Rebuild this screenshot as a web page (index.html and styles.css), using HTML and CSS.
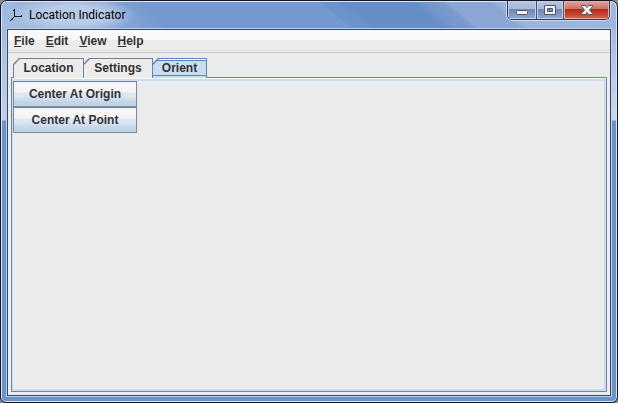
FILE: index.html
```html
<!DOCTYPE html>
<html lang="en">
<head>
<meta charset="utf-8">
<title>Location Indicator</title>
<link rel="stylesheet" href="styles.css">
</head>
<body>
<div class="window">
  <header class="titlebar">
    <svg class="app-icon" width="14" height="14" viewBox="0 0 14 14" shape-rendering="crispEdges" fill="#111820"><path d="M4 1h1v8H4zM5 8h7v1H5zM11 7h1v1h-1zM3 9h1v1H3zM2 10h1v1H2zM1 11h2v1H1zM0 12h1v1H0zM3 2h1v1H3z"/></svg>
    <h1 class="title">Location Indicator</h1>
    <div class="controls">
      <button class="control" aria-label="Minimize"><svg width="14" height="14" viewBox="0 0 14 14"><rect x="1.500" y="7.500" width="11" height="4" rx="1" fill="#f4f4f4" stroke="#535666"/></svg></button>
      <button class="control" aria-label="Maximize"><svg width="14" height="14" viewBox="0 0 14 14"><path fill-rule="evenodd" d="M1.500 2.500h11v9h-11zM4.500 5.500v3h5v-3z" fill="#f4f4f4" stroke="#535666"/></svg></button>
      <button class="control close" aria-label="Close"><svg width="14" height="14" viewBox="0 0 14 14"><path d="M1.500 2.500h4L7 4.500l1.500-2h4v1L9.500 7l3 3.500v1h-4L7 9.500l-1.500 2h-4v-1L4.500 7l-3-3.500z" fill="#f6f6f6" stroke="#535666"/></svg></button>
    </div>
  </header>
  <main class="content">
    <nav class="menubar">
      <button><u>F</u>ile</button>
      <button><u>E</u>dit</button>
      <button><u>V</u>iew</button>
      <button><u>H</u>elp</button>
    </nav>
    <div class="tabs" role="tablist">
      <button class="tab location" role="tab" aria-selected="false"><span>Location</span></button>
      <button class="tab settings" role="tab" aria-selected="false"><span>Settings</span></button>
      <button class="tab orient" role="tab" aria-selected="true"><span>Orient</span></button>
    </div>
    <section class="pane" role="tabpanel">
      <div class="actions">
        <button class="action">Center At Origin</button>
        <button class="action">Center At Point</button>
      </div>
    </section>
  </main>
</div>
</body>
</html>
```
FILE: styles.css
```css
* { box-sizing: border-box; }
body { margin: 0; background: #8a8a88; font: bold 12px/16px "Liberation Sans", Arial, sans-serif; color: #333; }
button { font: inherit; color: inherit; border: 0; padding: 0; margin: 0; background: none; }

.window {
  display: flex;
  flex-direction: column;
  min-height: 100vh;
  padding: 0 5px 4px;
  border: 1px solid #14182a;
  border-radius: 7px 7px 6px 6px;
  box-shadow: inset 0 0 0 1px #d8e8f8;
  background:
    linear-gradient(#d8e8f8, #d8e8f8) 0 0 / 100% 1px no-repeat,
    radial-gradient(ellipse 64px 18px at 72px 14px, #b9cce7 50%, #b9cce700 100%) no-repeat,
    linear-gradient(#a5bce000 28px, #a5bce0 28px, #c9daef 119px, #6c93cc 120px, #6c93cc) 100% 0 / 7px 100% no-repeat,
    linear-gradient(#a5bce000 28px, #a5bce0 28px, #bdd0eb 119px, #6c93cc 120px, #6c93cc) 0 0 / 7px 100% no-repeat,
    linear-gradient(40deg, #a6bee1, #8eacda 70px, #7399d0 110px, #7399d0 225px, #6b93cb 227px, #6b93cb 238px, #658dc6 240px, #658dc6 284px, #7296cc 292px, #7b9bcf 304px, #89a6d5 308px, #89a6d5 334px, #9bb4dc 340px, #a0b8de) 0 0 / 100% 28px no-repeat,
    #6c93cc;
}

.titlebar { display: flex; height: 27px; padding: 0 2px 0 4px; }
.app-icon { margin-top: 7px; }
.title { margin: 6px auto 0 5px; font: 12px/16px Roboto, "Open Sans", sans-serif; color: #000; }
.controls {
  display: flex;
  height: 19px;
  border: 1px solid #343c50;
  border-top: 0;
  border-radius: 0 0 5px 5px;
  box-shadow: 0 1px 0 #c9d8ed, 1px 0 0 #c9d8ed, -1px 0 0 #c9d8ed;
  overflow: hidden;
}
.control {
  display: grid;
  place-items: center;
  width: 28px;
  background: linear-gradient(#b7c6de, #a4b8d8 45%, #7088b2 46%, #8fa9cf);
  box-shadow: inset 0 0 0 1px #bfd0e8;
}
.control + .control { width: 27px; border-left: 1px solid #47546e; }
.control.control.close {
  width: 46px;
  background: linear-gradient(#e0a59c, #cf7164 45%, #b02d1d 46%, #c6432f 75%, #d5705a);
  box-shadow: inset 0 0 0 1px #e5aca3;
}

.content {
  display: flex;
  flex: 1;
  flex-direction: column;
  border: 1px solid #3b4763;
  outline: 1px solid #b8d0e8;
  margin: 1px 1px 2px;
  background: #ececec;
}
.menubar {
  display: flex;
  gap: 11px;
  height: 23px;
  padding: 3px 6px;
  border-bottom: 1px solid #ccc;
  box-shadow: inset 0 -1px #eee, inset 0 -2px #ddd;
  background: linear-gradient(#f9f9f9 10px, #ececec 10px);
}

.tabs { display: flex; padding: 5px 5px 0; height: 24px; }
.tab {
  --edge: #70819b;
  --fill: #ececec;
  position: relative;
  height: 20px;
  margin-right: -1px;
  background: var(--edge);
  clip-path: polygon(6px 0, 100% 0, 100% 100%, 0 100%, 0 6px);
}
.tab::before {
  content: "";
  position: absolute;
  inset: 1px 1px 0;
  background: var(--fill);
  clip-path: polygon(6px 0, 100% 0, 100% 100%, 0 100%, 0 6px);
}
.tab span { position: relative; }
.location { width: 71px; }
.settings { width: 70px; }
.orient {
  --edge: #5f81bd;
  --fill: linear-gradient(#fff 1px, #5f81bd 1px, #5f81bd 2px, #c8ddf2 2px, #c8ddf2 16px, #5f81bd 16px, #5f81bd 17px, #c8ddf2 17px);
  width: 55px;
}

.pane {
  flex: 1;
  margin: 0 3px 3px;
  border: 1px solid #6d86ae;
  padding: 3px 1px 2px;
  box-shadow: inset 0 1px #fff, inset 0 3px #c8ddf2, inset 1px 0 #c8ddf2, inset -2px 0 #c8ddf2, inset 0 -2px #c8ddf2;
}
.actions { display: flex; flex-direction: column; width: 124px; }
.action {
  height: 26px;
  border: 1px solid #7a8a99;
  background: linear-gradient(#e4edf6, #f8f8f8 2px, #f4f4f4 10px, #dce7f2 11px, #dce7f2 14px, #c2d5e7 20px, #c2d5e7);
}
```
